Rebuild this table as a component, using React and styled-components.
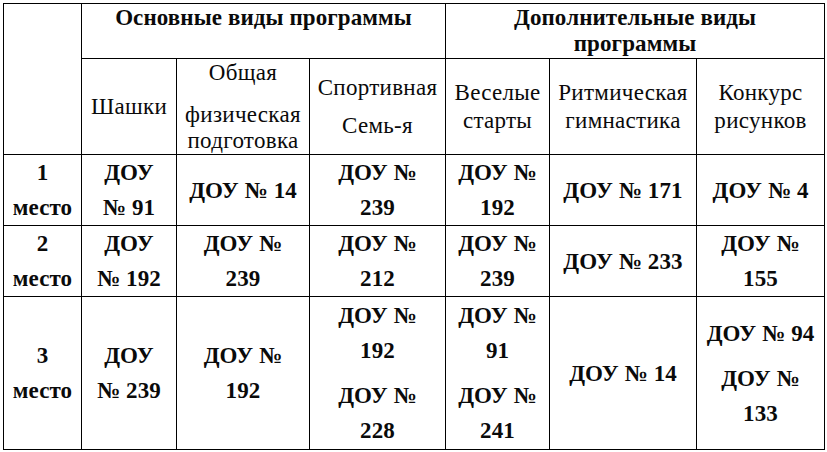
import React from "react";
import styled, { createGlobalStyle } from "styled-components";

const SERIF = '"Liberation Serif", "Times New Roman", serif';

const GlobalStyle = createGlobalStyle`
  html, body {
    margin: 0;
    padding: 0;
    background: #ffffff;
  }
  body {
    font-family: ${SERIF};
    color: #000;
  }
`;

const Page = styled.div`
  padding: 3px 0 0 3px;
`;

const Table = styled.table`
  border-collapse: collapse;
  table-layout: fixed;
  width: 822px;
  font-family: ${SERIF};
`;

const Row = styled.tr`
  height: ${(p) => p.$h}px;
`;

const Cell = styled.td`
  border: 1px solid #000;
  padding: ${(p) => (p.$top ? "1px 0 0" : "0")};
  text-align: center;
  vertical-align: ${(p) => (p.$top ? "top" : "middle")};
  font-family: ${SERIF};
  font-size: 23px;
  font-weight: ${(p) => (p.$bold ? 700 : 400)};
  letter-spacing: ${(p) => (p.$bold ? "0.1px" : "0.3px")};
  color: #0a0a0a;
  white-space: nowrap;
`;

const Stack = styled.div`
  display: flex;
  flex-direction: column;
  align-items: center;
  gap: ${(p) => p.$gap || 0}px;
`;

const Para = styled.div`
  display: flex;
  flex-direction: column;
  align-items: center;
`;

const Line = styled.span`
  display: block;
  line-height: ${(p) => p.$lh}px;
`;

const widths = [78, 95, 133, 136, 104, 147, 128];

function Content({ paras, lh, gap }) {
  return (
    <Stack $gap={gap}>
      {paras.map((lines, i) => (
        <Para key={i}>
          {lines.map((t, j) => (
            <Line key={j} $lh={lh}>
              {t}
            </Line>
          ))}
        </Para>
      ))}
    </Stack>
  );
}

const subHeaders = [
  { paras: [["Шашки"]], lh: 28, gap: 0 },
  { paras: [["Общая"], ["физическая", "подготовка"]], lh: 26, gap: 16 },
  { paras: [["Спортивная"], ["Семь-я"]], lh: 27, gap: 11 },
  { paras: [["Веселые", "старты"]], lh: 28, gap: 0 },
  { paras: [["Ритмическая", "гимнастика"]], lh: 28, gap: 0 },
  { paras: [["Конкурс", "рисунков"]], lh: 28, gap: 0 },
];

const rows = [
  {
    h: 71,
    cells: [
      [["1", "место"]],
      [["ДОУ", "№ 91"]],
      [["ДОУ № 14"]],
      [["ДОУ №", "239"]],
      [["ДОУ №", "192"]],
      [["ДОУ № 171"]],
      [["ДОУ № 4"]],
    ],
  },
  {
    h: 71,
    cells: [
      [["2", "место"]],
      [["ДОУ", "№ 192"]],
      [["ДОУ №", "239"]],
      [["ДОУ №", "212"]],
      [["ДОУ №", "239"]],
      [["ДОУ № 233"]],
      [["ДОУ №", "155"]],
    ],
  },
  {
    h: 153,
    cells: [
      [["3", "место"]],
      [["ДОУ", "№ 239"]],
      [["ДОУ №", "192"]],
      [
        ["ДОУ №", "192"],
        ["ДОУ №", "228"],
      ],
      [
        ["ДОУ №", "91"],
        ["ДОУ №", "241"],
      ],
      [["ДОУ № 14"]],
      [["ДОУ № 94"], ["ДОУ №", "133"]],
    ],
  },
];

export default function App() {
  return (
    <>
      <GlobalStyle />
      <Page>
        <Table>
          <colgroup>
            {widths.map((w, i) => (
              <col key={i} style={{ width: w }} />
            ))}
          </colgroup>
          <tbody>
            <Row $h={55}>
              <Cell rowSpan={2} />
              <Cell colSpan={3} $bold $top>
                <Content paras={[["Основные виды программы"]]} lh={26} />
              </Cell>
              <Cell colSpan={3} $bold $top>
                <Content
                  paras={[["Дополнительные виды", "программы"]]}
                  lh={26}
                />
              </Cell>
            </Row>
            <Row $h={96}>
              {subHeaders.map((c, i) => (
                <Cell key={i}>
                  <Content paras={c.paras} lh={c.lh} gap={c.gap} />
                </Cell>
              ))}
            </Row>
            {rows.map((r, i) => (
              <Row key={i} $h={r.h}>
                {r.cells.map((paras, j) => (
                  <Cell key={j} $bold>
                    <Content paras={paras} lh={35} gap={10} />
                  </Cell>
                ))}
              </Row>
            ))}
          </tbody>
        </Table>
      </Page>
    </>
  );
}
